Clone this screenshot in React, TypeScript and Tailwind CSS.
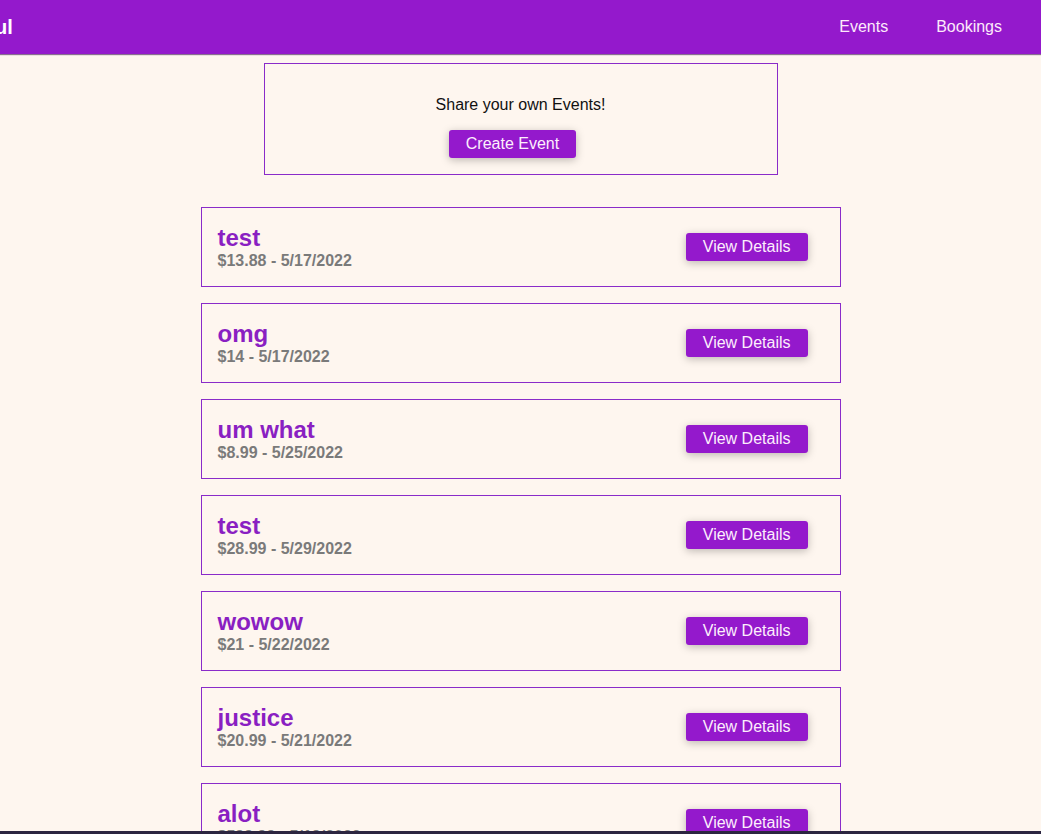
const events = [
  { title: "test", price: "$13.88", date: "5/17/2022" },
  { title: "omg", price: "$14", date: "5/17/2022" },
  { title: "um what", price: "$8.99", date: "5/25/2022" },
  { title: "test", price: "$28.99", date: "5/29/2022" },
  { title: "wowow", price: "$21", date: "5/22/2022" },
  { title: "justice", price: "$20.99", date: "5/21/2022" },
  { title: "alot", price: "$599.99", date: "5/19/2022" },
  { title: "party", price: "$10", date: "5/30/2022" },
];

function Button({ children, className = "" }: { children: React.ReactNode; className?: string }) {
  return (
    <button
      className={
        "bg-[#9419cc] text-[#fdeefc] text-base leading-[20px] px-[17px] py-1 rounded-[3px] shadow-[0_2px_8px_rgba(0,0,0,0.26)] cursor-pointer " +
        className
      }
    >
      {children}
    </button>
  );
}

export default function App() {
  return (
    <div className="min-h-screen bg-[#fef6ef] font-['Liberation_Sans',Arial,sans-serif] text-[#111]">
      <header className="h-[54px] bg-[#9419cc] flex items-center justify-between pr-[39px] shadow-[0_1px_1px_rgba(60,20,80,0.6)]">
        <h1 className="-ml-[5px] text-[20px] font-bold text-white">ul</h1>
        <nav className="flex gap-12 text-base text-[#fde9fb]">
          <a href="#">Events</a>
          <a href="#">Bookings</a>
        </nav>
      </header>

      <main className="pt-[9px] pb-8 flex flex-col items-center">
        <div className="w-[514px] border border-[#8a2bc9] p-4 text-center">
          <p className="my-4 text-base leading-[18px]">Share your own Events!</p>
          <Button className="mr-4">Create Event</Button>
        </div>

        <ul className="mt-8 w-[640px] flex flex-col gap-4">
          {events.map((ev, i) => (
            <li key={i} className="border border-[#8a2bc9] py-4 pl-4 pr-8 flex items-center justify-between">
              <div>
                <h2 className="text-2xl leading-[28px] font-bold text-[#8a1fc2]">{ev.title}</h2>
                <h3 className="text-base leading-[18px] font-bold text-[#7a7a7a]">
                  {ev.price} - {ev.date}
                </h3>
              </div>
              <Button>View Details</Button>
            </li>
          ))}
        </ul>
      </main>

      <div className="fixed bottom-0 left-0 right-0 h-[3px] bg-[#2b2540]" />
    </div>
  );
}
